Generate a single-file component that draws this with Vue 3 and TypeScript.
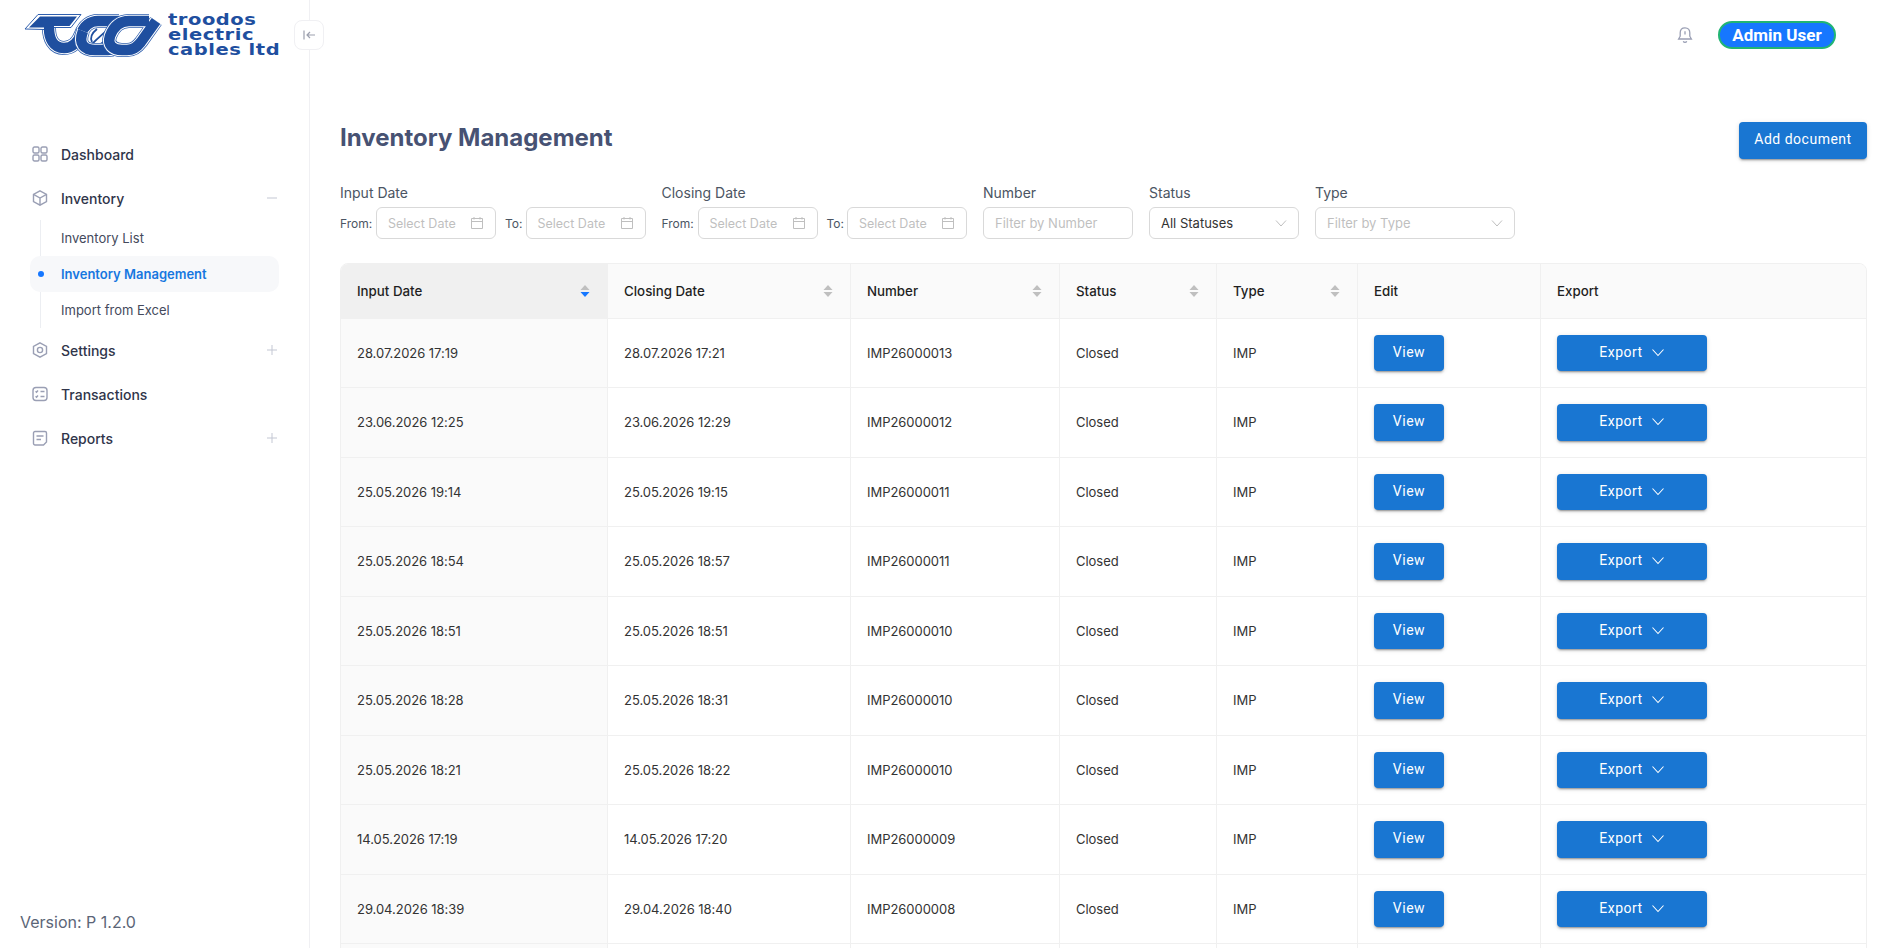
<template>
  <div class="app">
    <aside class="sidebar">
      <div class="logo-row">
        <svg class="logo-mark" viewBox="24 12 140 46" fill="none">
          <path d="M112,27 C105,31 98,38 90,46 M97,29 C92,33 90,38 92,42 M97,45 C101,45 104,42 107,38" stroke="#1f4f9f" stroke-width="1.800" />
          <g v-for="(letter, n) in logoLetters" :key="n">
            <path :d="letter" stroke="#2f5fae" stroke-width="14" />
            <path :d="letter" stroke="#ffffff" stroke-width="12.500" />
            <path :d="letter" stroke="#1f4f9f" stroke-width="10.500" />
          </g>
          <path d="M25,29 L38,14.500 L81,14.500 L71,27.500 L52,27.500 L44,29.500 Z" fill="#ffffff" stroke="#2f5fae" stroke-width="1" />
          <path d="M29,27.500 L40,16.500 L77,16.500 L69.500,26 L54,26 L54,30 L44,30 L44,27.500 Z" fill="#1f4f9f" />
        </svg>
        <div class="logo-text">
          <span>troodos</span>
          <span>electric</span>
          <span>cables ltd</span>
        </div>
      </div>
      <button class="collapse-btn" aria-label="Collapse">
        <svg width="14" height="14" viewBox="0 0 14 14" fill="none" stroke="#9ca0ae" stroke-width="1.2">
          <path d="M2 2.500v9M13 7H5M8 4 5 7l3 3" />
        </svg>
      </button>

      <nav class="nav">
        <a class="nav-item">
          <svg class="nav-icon" viewBox="0 0 16 16">
            <rect x="1" y="1" width="6" height="6" rx="1.500" />
            <rect x="9" y="1" width="6" height="6" rx="1.500" />
            <rect x="1" y="9" width="6" height="6" rx="1.500" />
            <rect x="9" y="9" width="6" height="6" rx="1.500" />
          </svg>
          <span>Dashboard</span>
        </a>
        <a class="nav-item">
          <svg class="nav-icon" viewBox="0 0 16 16">
            <path d="M8 .8 14.500 4.400v7.200L8 15.200 1.500 11.600V4.400Z" />
            <path d="M1.500 4.400 8 8l6.500-3.600M8 8v7.200" />
          </svg>
          <span>Inventory</span>
          <svg class="toggle" viewBox="0 0 10 10"><path d="M0 5h10" /></svg>
        </a>
        <div class="sub-nav">
          <a class="sub-item">Inventory List</a>
          <a class="sub-item active">Inventory Management</a>
          <a class="sub-item">Import from Excel</a>
        </div>
        <a class="nav-item">
          <svg class="nav-icon" viewBox="0 0 16 16">
            <path d="M8 .8 14.500 4.400v7.200L8 15.200 1.500 11.600V4.400Z" />
            <circle cx="8" cy="8" r="2.600" />
          </svg>
          <span>Settings</span>
          <svg class="toggle" viewBox="0 0 10 10"><path d="M0 5h10M5 0v10" /></svg>
        </a>
        <a class="nav-item">
          <svg class="nav-icon" viewBox="0 0 16 16">
            <rect x="1" y="1.500" width="14" height="13" rx="3" />
            <path d="M3.600 5.300l.9.9 1.500-1.700M3.600 10.300l.9.9 1.500-1.700M8.500 5.500h4M8.500 10.500h4" />
          </svg>
          <span>Transactions</span>
        </a>
        <a class="nav-item">
          <svg class="nav-icon" viewBox="0 0 16 16">
            <path d="M3 1.500h10a1.500 1.500 0 0 1 1.500 1.500v9l-3 3H3A1.500 1.500 0 0 1 1.500 13.500V3A1.500 1.500 0 0 1 3 1.500Z" />
            <path d="M4.500 6h7M4.500 9.500h4.500" />
          </svg>
          <span>Reports</span>
          <svg class="toggle" viewBox="0 0 10 10"><path d="M0 5h10M5 0v10" /></svg>
        </a>
      </nav>

      <div class="version">Version: P 1.2.0</div>
    </aside>

    <main class="main">
      <header class="topbar">
        <svg class="bell" width="18" height="18" viewBox="0 0 18 18" fill="none" stroke="#9a9fb4" stroke-width="1.300">
          <path d="M9 1.800c-3 0-4.800 2.200-4.800 5v3.400L2.600 13h12.800l-1.600-2.800V6.800c0-2.800-1.800-5-4.800-5Z" />
          <path d="M7.300 15.200a1.800 1.800 0 0 0 3.400 0M9 5.200v3.300" />
        </svg>
        <div class="user-pill">Admin User</div>
      </header>

      <div class="title-row">
        <h1>Inventory Management</h1>
        <button class="btn">Add document</button>
      </div>

      <div class="filters">
        <div class="filter" v-for="group in dateGroups" :key="group">
          <label>{{ group }}</label>
          <div class="date-range">
            <span class="range-label">From:</span>
            <div class="field date"><span>Select Date</span><svg class="cal" viewBox="0 0 14 14"><path d="M1.500 2.500h11v10h-11zM1.500 5.500h11M4 1v2.500M10 1v2.500" /></svg></div>
            <span class="range-label to">To:</span>
            <div class="field date"><span>Select Date</span><svg class="cal" viewBox="0 0 14 14"><path d="M1.500 2.500h11v10h-11zM1.500 5.500h11M4 1v2.500M10 1v2.500" /></svg></div>
          </div>
        </div>
        <div class="filter">
          <label>Number</label>
          <div class="field number"><span>Filter by Number</span></div>
        </div>
        <div class="filter">
          <label>Status</label>
          <div class="field status"><span class="value">All Statuses</span><svg class="caret" viewBox="0 0 12 12"><path d="M1 3.500 6 9l5-5.500" /></svg></div>
        </div>
        <div class="filter">
          <label>Type</label>
          <div class="field type"><span>Filter by Type</span><svg class="caret" viewBox="0 0 12 12"><path d="M1 3.500 6 9l5-5.500" /></svg></div>
        </div>
      </div>

      <div class="table-wrap">
        <table>
          <colgroup>
            <col v-for="w in colWidths" :key="w" :style="{ width: w + 'px' }" />
          </colgroup>
          <thead>
            <tr>
              <th v-for="(col, i) in columns" :key="col.title" :class="{ sorted: i === 0 }">
                <div class="th-inner">
                  <span>{{ col.title }}</span>
                  <svg v-if="col.sortable" class="sorter" viewBox="0 0 10 14">
                    <path d="M5 1 9.500 6H.5Z" fill="#bfbfbf" />
                    <path d="M5 13 .5 8h9Z" :fill="i === 0 ? '#1677ff' : '#bfbfbf'" />
                  </svg>
                </div>
              </th>
            </tr>
          </thead>
          <tbody>
            <tr v-for="(row, i) in rows" :key="i">
              <td class="sorted">{{ row.input }}</td>
              <td>{{ row.closing }}</td>
              <td>{{ row.number }}</td>
              <td>Closed</td>
              <td>IMP</td>
              <td><button class="btn view">View</button></td>
              <td>
                <button class="btn export">
                  Export
                  <svg viewBox="0 0 14 14" fill="none" stroke="#fff" stroke-width="1.100"><path d="M1.500 4.500 7 10.500l5.500-6" /></svg>
                </button>
              </td>
            </tr>
            <!-- next row starts right at the bottom of the window, nothing of it but the lines shows -->
            <tr class="cut-row">
              <td class="sorted"></td>
              <td v-for="n in 6" :key="n"></td>
            </tr>
          </tbody>
        </table>
      </div>
    </main>
  </div>
</template>

<script setup lang="ts">
const logoLetters = [
  'M49,28 C49,38 53,48 64,48 C72,48 78,42 81,34 C84,26 90,21 98,21 L119,21',
  'M83,31 C78,44 84,50 95,50 L108,50 C113,50 117,48 120,44',
  'M149,21 L129,21 C119,21 113,28 110,36 C107,45 113,50 122,50 L127,50 C134,50 138,46 141,42 L156,21'
]

const dateGroups = ['Input Date', 'Closing Date']

const columns = [
  { title: 'Input Date', sortable: true },
  { title: 'Closing Date', sortable: true },
  { title: 'Number', sortable: true },
  { title: 'Status', sortable: true },
  { title: 'Type', sortable: true },
  { title: 'Edit', sortable: false },
  { title: 'Export', sortable: false }
]

const colWidths = [267, 243, 209, 157, 141, 183, 325]

const rows = [
  { input: '28.07.2026 17:19', closing: '28.07.2026 17:21', number: 'IMP26000013' },
  { input: '23.06.2026 12:25', closing: '23.06.2026 12:29', number: 'IMP26000012' },
  { input: '25.05.2026 19:14', closing: '25.05.2026 19:15', number: 'IMP26000011' },
  { input: '25.05.2026 18:54', closing: '25.05.2026 18:57', number: 'IMP26000011' },
  { input: '25.05.2026 18:51', closing: '25.05.2026 18:51', number: 'IMP26000010' },
  { input: '25.05.2026 18:28', closing: '25.05.2026 18:31', number: 'IMP26000010' },
  { input: '25.05.2026 18:21', closing: '25.05.2026 18:22', number: 'IMP26000010' },
  { input: '14.05.2026 17:19', closing: '14.05.2026 17:20', number: 'IMP26000009' },
  { input: '29.04.2026 18:39', closing: '29.04.2026 18:40', number: 'IMP26000008' }
]
</script>

<style>
html,
body {
  overflow: hidden;
  background: #fff;
}
</style>

<style scoped>
.app {
  display: flex;
  height: 100vh;
  overflow: hidden;
  font-family: Inter, "Liberation Sans", sans-serif;
  color: #1f2937;
}

.sidebar {
  position: relative;
  display: flex;
  flex-direction: column;
  flex: 0 0 310px;
  box-sizing: border-box;
  border-right: 1px solid #f0f0f3;
}

.logo-row {
  display: flex;
  align-items: center;
  gap: 4px;
  height: 70px;
  padding-left: 24px;
}

.logo-mark {
  flex: none;
  width: 140px;
  height: 46px;
}

.logo-text {
  display: flex;
  flex-direction: column;
  font-family: "DejaVu Sans", sans-serif;
  font-weight: 700;
  font-size: 15px;
  line-height: 15px;
  letter-spacing: 0.400px;
  color: #1f4f9f;
  white-space: nowrap;
  transform: scaleX(1.300);
  transform-origin: left center;
}

.collapse-btn {
  position: absolute;
  top: 20px;
  left: 294px;
  display: flex;
  align-items: center;
  justify-content: center;
  width: 30px;
  height: 30px;
  padding: 0;
  background: #fff;
  border: 1px solid #f0f0f3;
  border-radius: 8px;
}

.nav {
  display: flex;
  flex-direction: column;
  margin-top: 62px;
  padding: 0 30px;
}

.nav-item {
  display: flex;
  align-items: center;
  gap: 13px;
  height: 44px;
  padding-left: 2px;
  font-size: 14px;
  font-weight: 500;
  color: #30354a;
}

.nav-icon {
  flex: none;
  width: 16px;
  height: 16px;
  fill: none;
  stroke: #9a9fb4;
  stroke-width: 1.400;
}

.toggle {
  width: 10px;
  height: 10px;
  margin-left: auto;
  margin-right: 2px;
  fill: none;
  stroke: #c3c7d3;
  stroke-width: 1;
}

.sub-nav {
  position: relative;
  display: flex;
  flex-direction: column;
}

.sub-nav::before {
  content: "";
  position: absolute;
  top: 0;
  bottom: 0;
  left: 10px;
  width: 1px;
  background: #eceef2;
}

.sub-item {
  position: relative;
  display: flex;
  align-items: center;
  height: 36px;
  padding-left: 31px;
  border-radius: 10px;
  font-size: 13px;
  color: #444a5c;
}

.sub-item.active {
  background: #f7f8fa;
  font-weight: 600;
  color: #1677e0;
}

.sub-item.active::before {
  content: "";
  position: absolute;
  left: 8px;
  top: 15px;
  width: 6px;
  height: 6px;
  border-radius: 50%;
  background: #1677ff;
}

.version {
  margin-top: auto;
  padding: 0 0 16px 20px;
  font-size: 16px;
  line-height: 20px;
  color: #5b6577;
}

.main {
  flex: 1;
  min-width: 0;
  padding: 0 30px;
}

.topbar {
  display: flex;
  align-items: center;
  justify-content: flex-end;
  gap: 24px;
  height: 70px;
  padding-right: 31px;
}

.user-pill {
  box-sizing: border-box;
  display: flex;
  align-items: center;
  justify-content: center;
  width: 118px;
  height: 28px;
  border: 2px solid #22b573;
  border-radius: 14px;
  background: #1677ff;
  color: #fff;
  font-family: Roboto, sans-serif;
  font-size: 17px;
  font-weight: 700;
}

.title-row {
  display: flex;
  align-items: flex-start;
  justify-content: space-between;
  margin-top: 52px;
}

h1 {
  margin: 1px 0 0;
  font-size: 24px;
  line-height: 30px;
  font-weight: 700;
  color: #475273;
}

.btn {
  box-sizing: border-box;
  width: 128px;
  height: 36.500px;
  padding: 5px 0 7px;
  border: 0;
  border-radius: 4px;
  background: #1976d2;
  color: #fff;
  font-family: Roboto, sans-serif;
  font-size: 14px;
  font-weight: 400;
  line-height: 24.500px;
  letter-spacing: 0.500px;
  box-shadow: 0 3px 1px -2px rgba(0, 0, 0, 0.2), 0 2px 2px 0 rgba(0, 0, 0, 0.14), 0 1px 5px 0 rgba(0, 0, 0, 0.12);
}

.filters {
  display: flex;
  gap: 16px;
  margin-top: 23.500px;
}

.filter label {
  display: block;
  margin-bottom: 3px;
  font-size: 14px;
  line-height: 22px;
  color: #4b5563;
}

.date-range {
  display: flex;
  align-items: center;
}

.range-label {
  width: 36px;
  font-size: 12px;
  color: #4b5563;
}

.range-label.to {
  width: 20.500px;
  margin-left: 9px;
}

.field {
  box-sizing: border-box;
  display: flex;
  align-items: center;
  justify-content: space-between;
  height: 32px;
  padding: 0 11px;
  border: 1px solid #d9d9d9;
  border-radius: 6px;
  font-size: 13px;
  color: #bfbfbf;
  white-space: nowrap;
}

.field.date {
  width: 120px;
  font-size: 12.500px;
}

.field.number,
.field.status {
  width: 150px;
}

.field.type {
  width: 200px;
}

.value {
  color: #333;
}

.cal {
  width: 14px;
  height: 14px;
  fill: none;
  stroke: #bfbfbf;
  stroke-width: 1;
}

.caret {
  width: 12px;
  height: 12px;
  fill: none;
  stroke: #bfbfbf;
  stroke-width: 1;
}

.table-wrap {
  margin-top: 24px;
  border: 1px solid #f0f0f0;
  border-radius: 8px;
  overflow: hidden;
}

table {
  width: 100%;
  table-layout: fixed;
  border-collapse: separate;
  border-spacing: 0;
  font-size: 13px;
  letter-spacing: -0.040px;
  color: #333;
}

th {
  height: 54.500px;
  box-sizing: border-box;
  padding: 0 16px;
  background: #fafafa;
  border-bottom: 1px solid #f0f0f0;
  border-right: 1px solid #f0f0f0;
  text-align: left;
  font-size: 13.300px;
  font-weight: 500;
  letter-spacing: 0;
  color: #1f1f1f;
}

th:last-child,
td:last-child {
  border-right: 0;
}

th.sorted {
  background: #f0f0f0;
}

.th-inner {
  display: flex;
  align-items: center;
  justify-content: space-between;
}

.sorter {
  width: 10px;
  height: 14px;
  margin-right: 1px;
}

td {
  padding: 16px;
  border-bottom: 1px solid #f0f0f0;
  border-right: 1px solid #f0f0f0;
}

td.sorted {
  background: #fafafa;
}

.cut-row td {
  height: 69.500px;
  box-sizing: border-box;
}

.view {
  display: block;
  width: 70px;
}

.export {
  display: flex;
  align-items: center;
  justify-content: center;
  gap: 8px;
  width: 150px;
}

.export svg {
  width: 14px;
  height: 14px;
}
</style>
